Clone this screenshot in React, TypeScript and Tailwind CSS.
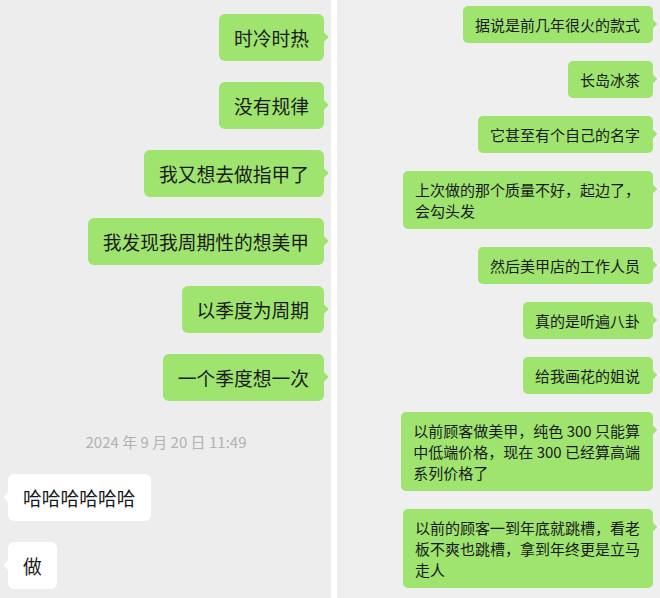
import React from "react";

const font = { fontFamily: '"Noto Sans CJK SC", "Noto Sans", sans-serif' };

function LeftMine({ text }: { text: string }) {
  return (
    <div className="relative self-end rounded-[6px] bg-[#9ee46f] px-[15px] py-[10px] text-[18.75px] leading-[27px] text-[#1a1a1a] whitespace-nowrap">
      {text}
      <span className="absolute right-[-3px] top-[19px] h-[8px] w-[8px] rotate-45 rounded-[1px] bg-[#9ee46f]" />
    </div>
  );
}

function LeftOther({ text }: { text: string }) {
  return (
    <div className="relative self-start rounded-[6px] bg-white px-[15px] py-[10px] text-[18.75px] leading-[27px] text-[#1a1a1a] whitespace-nowrap">
      {text}
      <span className="absolute left-[-3px] top-[19px] h-[8px] w-[8px] rotate-45 rounded-[1px] bg-white" />
    </div>
  );
}

function RightMine({ lines }: { lines: string[] }) {
  return (
    <div className="relative self-end rounded-[5px] bg-[#9ee46f] pl-[12px] pr-[13px] py-[8px] text-[15px] leading-[21px] text-[#1a1a1a] whitespace-nowrap">
      {lines.map((l, i) => (
        <div key={i}>{l}</div>
      ))}
      <span className="absolute right-[-3px] top-[15px] h-[6px] w-[6px] rotate-45 rounded-[1px] bg-[#9ee46f]" />
    </div>
  );
}

export default function App() {
  return (
    <div className="flex h-[598px] w-[660px] overflow-hidden bg-white" style={font}>
      <div className="flex w-[331px] flex-col bg-[#ededed] pt-[14px] pl-[8px] pr-[7px]">
        <div className="flex flex-col gap-[21px]">
          <LeftMine text="时冷时热" />
          <LeftMine text="没有规律" />
          <LeftMine text="我又想去做指甲了" />
          <LeftMine text="我发现我周期性的想美甲" />
          <LeftMine text="以季度为周期" />
          <LeftMine text="一个季度想一次" />
        </div>
        <div className="mt-[31px] mb-[22px] text-center text-[15px] leading-[20px] text-[#b2b2b2]">
          2024 年 9 月 20 日 11:49
        </div>
        <div className="flex flex-col gap-[21px]">
          <LeftOther text="哈哈哈哈哈哈" />
          <LeftOther text="做" />
        </div>
      </div>
      <div className="w-[6px] bg-white" />
      <div className="flex flex-1 flex-col gap-[18px] bg-[#efefef] pt-[6px] pr-[7px]">
        <RightMine lines={["据说是前几年很火的款式"]} />
        <RightMine lines={["长岛冰茶"]} />
        <RightMine lines={["它甚至有个自己的名字"]} />
        <RightMine lines={["上次做的那个质量不好，起边了，", "会勾头发"]} />
        <RightMine lines={["然后美甲店的工作人员"]} />
        <RightMine lines={["真的是听遍八卦"]} />
        <RightMine lines={["给我画花的姐说"]} />
        <RightMine
          lines={[
            "以前顾客做美甲，纯色 300 只能算",
            "中低端价格，现在 300 已经算高端",
            "系列价格了",
          ]}
        />
        <RightMine
          lines={[
            "以前的顾客一到年底就跳槽，看老",
            "板不爽也跳槽，拿到年终更是立马",
            "走人",
          ]}
        />
      </div>
    </div>
  );
}
